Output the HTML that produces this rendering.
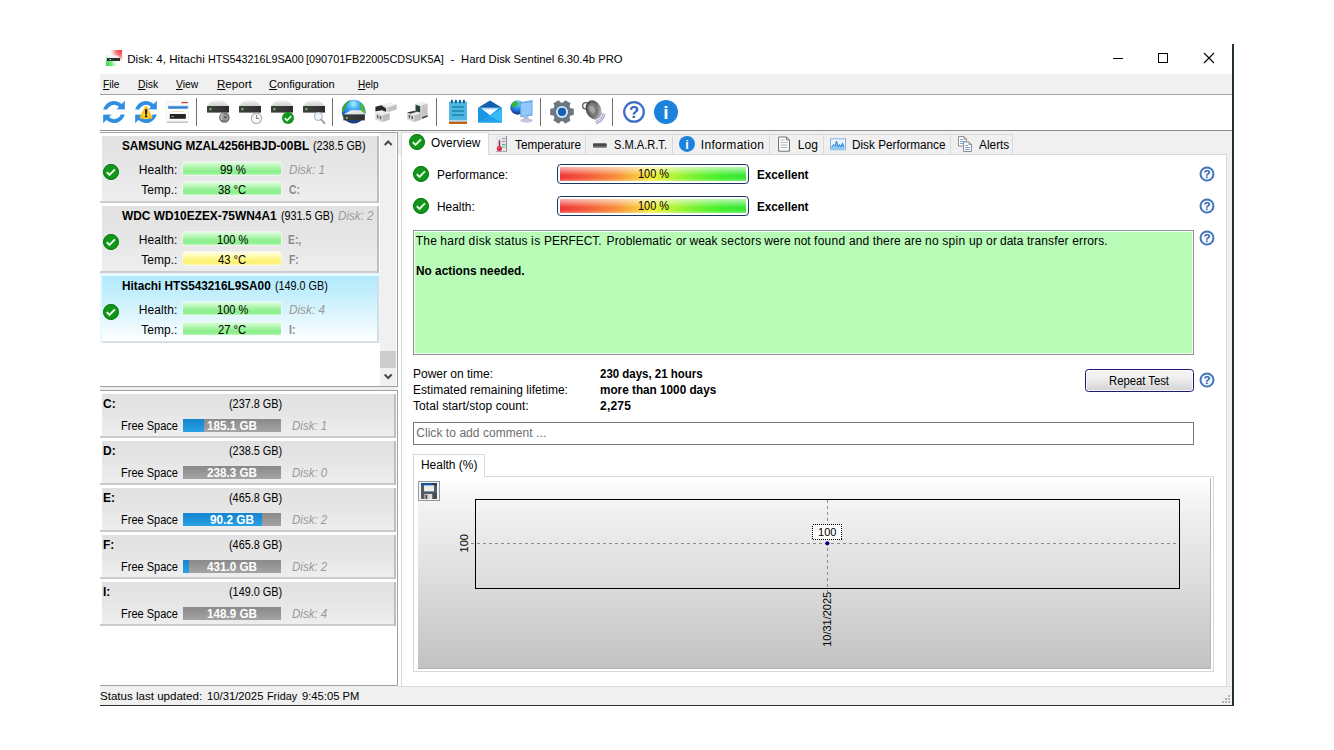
<!DOCTYPE html>
<html lang="en"><head><meta charset="utf-8"><title>Hard Disk Sentinel</title>
<style>
html,body{margin:0;padding:0;background:#fff;}
body{width:1334px;height:750px;position:relative;overflow:hidden;font-family:"Liberation Sans", sans-serif;font-size:12px;color:#000;}
#app div,#app svg{position:absolute;box-sizing:border-box;}
#app span.t{position:absolute;white-space:pre;line-height:14px;height:14px;transform-origin:0 0;}
#app u{text-decoration:underline;text-underline-offset:1px;text-decoration-thickness:1px;}

</style></head><body><div id="app">
<div style="left:1232px;top:44px;width:1.5px;height:662.4px;background:#243232;"></div>
<div style="left:100px;top:705px;width:1133.5px;height:1.3px;background:#243232;"></div>
<svg style="left:106px;top:50px" width="16" height="16" viewBox="0 0 16 16">
<defs><radialGradient id="tr" cx="1" cy="0" r="1"><stop offset="0" stop-color="#ee2c34"/><stop offset=".45" stop-color="#fb8a90"/><stop offset=".85" stop-color="#fff" stop-opacity="0"/></radialGradient>
<radialGradient id="tgn" cx="0" cy="1" r=".9"><stop offset="0" stop-color="#2fd43c"/><stop offset=".4" stop-color="#6fe878"/><stop offset=".9" stop-color="#fff" stop-opacity="0"/></radialGradient></defs>
<rect width="16" height="16" fill="#fff"/><rect width="16" height="16" fill="url(#tr)"/><rect width="16" height="16" fill="url(#tgn)"/>
<path d="M2.500 5.500h9.500l1.500 2.500h-12.500z" fill="#eef2f2" opacity=".8"/><rect x="1" y="8" width="13" height="3" fill="#26332f"/><rect x="3.600" y="9" width="1.400" height="1" fill="#e8e8e8"/></svg>
<svg style="left:1100px;top:45px" width="130" height="28" viewBox="0 0 130 28">
<path d="M13 13.5h10" stroke="#000" stroke-width="1"/>
<rect x="58.5" y="8.5" width="9" height="9" fill="none" stroke="#000" stroke-width="1"/>
<path d="M104 8l10 10M114 8l-10 10" stroke="#000" stroke-width="1.1"/></svg>
<div style="left:100px;top:74px;width:1132px;height:20px;background:#f0f0f0;"></div>
<div style="left:100px;top:94px;width:1132px;height:1px;background:#a2a2a2;"></div>
<div style="left:100px;top:130px;width:1132px;height:1px;background:#8c8c8c;"></div>
<div style="left:196px;top:98px;width:1px;height:28px;background:#6e6e6e;"></div>
<div style="left:332px;top:98px;width:1px;height:28px;background:#6e6e6e;"></div>
<div style="left:436px;top:98px;width:1px;height:28px;background:#6e6e6e;"></div>
<div style="left:540px;top:98px;width:1px;height:28px;background:#6e6e6e;"></div>
<div style="left:612px;top:98px;width:1px;height:28px;background:#6e6e6e;"></div>
<svg style="left:100px;top:96px" width="600" height="32" viewBox="100 96 600 32">
<defs>
<linearGradient id="hb" x1="0" y1="0" x2="1" y2="0"><stop offset="0" stop-color="#36482f"/><stop offset=".35" stop-color="#3a3a3a"/><stop offset="1" stop-color="#2e2e2e"/></linearGradient>
<linearGradient id="ht" x1="0" y1="0" x2="0" y2="1"><stop offset="0" stop-color="#f1f1f1"/><stop offset="1" stop-color="#cfcfcf"/></linearGradient>
<radialGradient id="gl" cx=".5" cy=".18" r=".85"><stop offset="0" stop-color="#b4f0ff"/><stop offset=".25" stop-color="#4cb4f4"/><stop offset=".6" stop-color="#1f74dc"/><stop offset="1" stop-color="#122c74"/></radialGradient>
<linearGradient id="gy" x1="0" y1="0" x2="1" y2="1"><stop offset="0" stop-color="#f4f4f4"/><stop offset="1" stop-color="#b4b4b4"/></linearGradient>
<linearGradient id="sp" x1="0" y1="0" x2="1" y2="1"><stop offset="0" stop-color="#3c3c3c"/><stop offset=".55" stop-color="#6a6a6a"/><stop offset="1" stop-color="#e0e0e0"/></linearGradient>
<clipPath id="ct"><rect x="100" y="99" width="27" height="10.600"/></clipPath><clipPath id="cb"><rect x="100" y="114.400" width="27" height="10.600"/></clipPath>
<g id="sync" fill="#2e8ee2"><g clip-path="url(#ct)"><path d="M105.090 113.570A9.050 9.050 0 0 1 121.400 106.800" fill="none" stroke="#2e8ee2" stroke-width="3.900"/><path d="M124.800 100.800v9h-8.600z"/></g>
<g clip-path="url(#cb)"><path d="M122.910 110.430A9.050 9.050 0 0 1 106.600 117.200" fill="none" stroke="#2e8ee2" stroke-width="3.900"/><path d="M103.200 123.200v-9h8.600z"/></g></g>
<g id="hdd"><path d="M211.300 101.200q.500-.600 1.500-.600h10.400q1 0 1.500.600l4.300 5h-22z" fill="url(#ht)"/><rect x="207" y="106" width="22" height="6.6" fill="url(#hb)"/><rect x="209.6" y="108.3" width="1.8" height="1.8" fill="#8fd48f"/></g>
</defs>
<use href="#sync"/>
<use href="#sync" x="32"/>
<path d="M146 107l5.200 10.600h-10.400z" fill="#fbc018" stroke="#fbc018" stroke-width="2.200" stroke-linejoin="round"/><path d="M146 108.500l3.800 8h-7.600z" fill="#fdd535"/><rect x="145" y="109.200" width="2.100" height="5.300" fill="#2a1a08"/><rect x="145" y="115.300" width="2.100" height="1.900" fill="#2a1a08"/>
<!-- view icon -->
<rect x="166.500" y="101.300" width="22" height="20.500" rx="1" fill="#fcfcfc" stroke="#f0f0f0"/><rect x="167" y="121.600" width="21" height="1.100" fill="#b4b4b4"/>
<rect x="181.500" y="102" width="6.200" height="1.200" fill="#d83030"/><rect x="168.200" y="105.900" width="19.500" height="2.800" fill="#2a7ccc"/><rect x="168.200" y="105.900" width="19.500" height="1" fill="#6aaae6"/><rect x="172" y="111" width="11" height="0.800" fill="#ecd8c0"/>
<rect x="169.800" y="114" width="16" height="4.800" fill="#242424"/><rect x="171.500" y="116" width="2" height="1" fill="#bbb"/>
<!-- hdd icons -->
<use href="#hdd"/><use href="#hdd" x="32"/><use href="#hdd" x="64"/><use href="#hdd" x="96"/>
<circle cx="224.400" cy="117.400" r="5.300" fill="#747474"/><circle cx="225" cy="117.400" r="3.200" fill="#9a9a9a"/><circle cx="225.400" cy="117.200" r="1.300" fill="#5a5a5a"/><path d="M221.800 119.800a3.800 3.800 0 0 1 1.800-6" fill="none" stroke="#d4d4d4" stroke-width="1.200"/>
<circle cx="256.5" cy="118.3" r="5.2" fill="#f6f6f6" stroke="#b4b4b4" stroke-width="1.2"/><path d="M256.5 114.8v3.7h2.8" fill="none" stroke="#8a8a8a" stroke-width="1.1"/>
<circle cx="288" cy="118" r="6" fill="#13961b"/><path d="M284.8 118.2l2.2 2.3l4.3-4.5" fill="none" stroke="#e8ffe8" stroke-width="1.7"/>
<circle cx="318.3" cy="116.5" r="3.9" fill="#f0f5fa" stroke="#b4c0cc" stroke-width="1.3"/><path d="M321.2 119.6l3.4 3.6" stroke="#9aa6b4" stroke-width="2" stroke-linecap="round"/>
<!-- globe + hdd -->
<circle cx="353.600" cy="111.600" r="11.800" fill="url(#gl)"/>
<path d="M343.500 106c1.500-3 4-5 7-5.800c-1 2-3 3-4 5s-1.500 4-2.500 6s-2 1-2-1s.500-3 1.500-4.200z" fill="#3aa83a"/><path d="M360.500 102.500c2.500 1.500 4.200 4.500 4.700 8s-.200 4.500-1.500 3.500s-2.500-3-3-5.500s-1.200-4.500-.200-6z" fill="#4cb840"/>
<path d="M351.200 110.200h9.400l4.600 4.400h-21.800z" fill="#f0f0f0"/><path d="M343.400 114.600h21.800v-.800l-4.600-3.600z" fill="#d8d8d8" opacity=".6"/><rect x="343.400" y="114.500" width="21.400" height="5.900" fill="url(#hb)"/><rect x="346" y="117" width="1.600" height="1.800" fill="#8fd48f"/>
<!-- device icons -->
<path d="M381.300 104.600l9.200-2.200l6.300 2.200l-8.800 2.600z" fill="#efefef"/><path d="M388 107.200l8.800-2.600v5l-8.800 2.600z" fill="#c2c2c2"/><path d="M381.300 104.600l6.700 2.600v5l-6.700-2.600z" fill="#d8d8d8"/>
<path d="M375.400 106.800l5.900-1.600l4.700 3.200v3.800l-4-2l-6.600 1.400z" fill="#2a2a2a"/>
<path d="M375.300 112.600l7.200-1.800l7.300 2.400l-7.300 2z" fill="#ebebeb"/><path d="M375.300 112.600l7.200 2.600v7l-7.200-2.800z" fill="#d9d9d9"/><path d="M382.500 115.200l7.300-2v6.400l-7.300 2.600z" fill="#bdbdbd"/>
<rect x="377" y="115" width="1.400" height="3.200" fill="#5a5a5a"/><rect x="379.800" y="116" width="1.400" height="3.200" fill="#5a5a5a"/>
<path d="M415 103.400l6.500-1.800l6.200 2l-6.400 1.800z" fill="#efefef"/><path d="M421.300 105.400l6.400-1.800v11.600l-6.400 2.200z" fill="#c4c4c4"/><path d="M415 103.400l6.300 2v12l-6.300-2.400z" fill="#dadada"/>
<path d="M415.600 104.800l4.600 1.500v6.700l-4.600-1.600z" fill="#27453a"/><path d="M422 117.200l5.700-2v1.600l-5.700 2z" fill="#2e2e2e"/>
<path d="M407 112.600l7.200-1.800l7.300 2.400l-7.300 2z" fill="#ebebeb"/><path d="M407 112.600l7.200 2.600v7l-7.200-2.800z" fill="#d9d9d9"/><path d="M414.200 115.200l7.300-2v6.400l-7.300 2.600z" fill="#bdbdbd"/><path d="M407 112.600l7.200-1.800l3 1l-7 1.900z" fill="#3c3c3c"/>
<rect x="408.700" y="115" width="1.400" height="3.200" fill="#5a5a5a"/><rect x="411.500" y="116" width="1.400" height="3.200" fill="#5a5a5a"/>
<!-- notepad -->
<rect x="449" y="101.500" width="18" height="22.500" rx="1" fill="#52b6e4"/><rect x="449" y="121.400" width="18" height="2.600" fill="#c4621a"/><rect x="449" y="120.400" width="18" height="1" fill="#e8f4fa"/>
<g fill="#1a5a8c"><rect x="451" y="99.800" width="1.800" height="3.400"/><rect x="455" y="99.800" width="1.800" height="3.400"/><rect x="459" y="99.800" width="1.800" height="3.400"/><rect x="463" y="99.800" width="1.800" height="3.400"/></g>
<g fill="#1688a8"><rect x="452" y="106.300" width="12" height="1.500"/><rect x="452" y="110.300" width="12" height="1.500"/><rect x="452" y="114.300" width="12" height="1.500"/></g>
<!-- mail -->
<path d="M478 107.800l12-7.300l12 7.300z" fill="#125cb0"/><rect x="478" y="107.800" width="24" height="14.700" fill="#1b96e4"/><path d="M502 108.500l-12.500 7.300l12.500 6.700z" fill="#38bcf8"/><path d="M478 122.500l11.500-6.700l12.500 6.700z" fill="#22a2ec"/><path d="M481.500 108.500h17l-8.500 6.800z" fill="#f6fcff"/><path d="M481.500 108.500h17l-1.500 1.200h-14z" fill="#cfe6f6"/>
<!-- globe + monitor -->
<circle cx="517.500" cy="107.500" r="7.200" fill="url(#gl)"/><path d="M512.500 103c1.500-2 4-2.500 5.500-1s0 3.500-2 4.500s-3.500 1-4-.500s-.300-2 .500-3z" fill="#3cb43c"/>
<path d="M519.500 102.500l13-2.500v15.500l-12 1.800z" fill="#5ea6ea"/><path d="M520.800 103.700l10.700-2v12.700l-9.900 1.500z" fill="#92c8fa"/>
<path d="M524 116.800l4-.600l1 3h-5.500z" fill="#a8b4d4"/><ellipse cx="526.500" cy="120.600" rx="6.300" ry="2.100" fill="#c4c6e0"/>
<!-- gear -->
<g transform="translate(562 111.900)"><g fill="#6d7781" transform="rotate(30)"><circle r="9.300"/><g id="tooth"><path d="M-3.900 -7l.8-4.800h6.200l.8 4.800zM-3.900 7l.8 4.800h6.200l.8-4.800z"/></g><use href="#tooth" transform="rotate(60)"/><use href="#tooth" transform="rotate(120)"/></g><circle r="6" fill="#d4e9fa"/><circle r="4.100" fill="#1560b2"/></g>
<!-- speaker -->
<circle cx="585.800" cy="105.800" r="3.200" fill="#f4f4f4" stroke="#5a5a62" stroke-width="1.300"/>
<g transform="translate(593.600 109.800) rotate(-24)"><ellipse rx="7.600" ry="9.800" fill="url(#sp)"/><ellipse cx="-0.500" cy="-0.500" rx="5" ry="7" fill="#7a7a7a"/><ellipse cx="-1" cy="-1" rx="2.600" ry="4" fill="#a4a4a4"/></g>
<g fill="none" stroke="#aaa4c6" stroke-width="1.200"><path d="M601.500 112.500a9 9 0 0 1-7 7"/><path d="M603.300 113.200a11 11 0 0 1-8 8.600"/><path d="M605 114a13 13 0 0 1-9 9.600"/></g>
<!-- help -->
<circle cx="634" cy="111.900" r="9.800" fill="#fff" stroke="#3f70c8" stroke-width="2.300"/>
<text x="634" y="118" text-anchor="middle" font-family="Liberation Sans,sans-serif" font-size="16.500" font-weight="700" fill="#2f62bc">?</text>
<!-- info -->
<circle cx="666" cy="111.900" r="12" fill="#1b83dc"/>
<text x="666" y="119" text-anchor="middle" font-family="Liberation Sans,sans-serif" font-size="19" font-weight="700" fill="#fff">i</text>
</svg>

<div style="left:100px;top:132px;width:298px;height:1px;background:#a0a0a0;"></div>
<div style="left:397px;top:132px;width:1px;height:255px;background:#a0a0a0;"></div>
<div style="left:100px;top:386px;width:298px;height:1px;background:#a0a0a0;"></div>
<div style="left:380px;top:133px;width:16px;height:253px;background:#f0f0f0;"></div>
<div style="left:380px;top:351px;width:16px;height:17px;background:#cdcdcd;"></div>
<svg style="left:379.5px;top:133px" width="17" height="253" viewBox="0 0 17 253"><path d="M4.700 12l3.500-3.500 3.500 3.500" fill="none" stroke="#484848" stroke-width="2"/><path d="M4.700 241.500l3.500 3.500 3.500-3.500" fill="none" stroke="#484848" stroke-width="2"/></svg>
<div style="left:102px;top:136px;width:275px;height:65px;background:linear-gradient(180deg,#e2e2e2 0%,#e6e6e6 50%,#efefef 100%);"></div>
<div style="left:100px;top:201px;width:279px;height:2px;background:#cbcbcb;"></div>
<div style="left:377px;top:136px;width:2px;height:67px;background:#bebebe;"></div>
<svg style="left:102px;top:163px" width="18" height="18" viewBox="-9 -9 18 18"><circle r="7.9" fill="#13961b"/><circle r="7.4" fill="none" stroke="#0b7a12" stroke-width="1"/><path d="M-4.2 0.2l2.7 2.8l5.4-5.6" fill="none" stroke="#e8ffe8" stroke-width="1.9"/></svg>
<div style="left:183px;top:162px;width:98px;height:13px;background:linear-gradient(180deg,#e6ffe6 0%,#c4fac4 22%,#9af29a 55%,#8aee8a 78%,#b2f8b2 100%);border-radius:1.5px;box-shadow:0 0 0 1px rgba(255,255,255,.45);"></div>
<div style="left:183px;top:182px;width:98px;height:13px;background:linear-gradient(180deg,#e6ffe6 0%,#c4fac4 22%,#9af29a 55%,#8aee8a 78%,#b2f8b2 100%);border-radius:1.5px;box-shadow:0 0 0 1px rgba(255,255,255,.45);"></div>
<div style="left:102px;top:206px;width:275px;height:65px;background:linear-gradient(180deg,#e2e2e2 0%,#e6e6e6 50%,#efefef 100%);"></div>
<div style="left:100px;top:271px;width:279px;height:2px;background:#cbcbcb;"></div>
<div style="left:377px;top:206px;width:2px;height:67px;background:#bebebe;"></div>
<svg style="left:102px;top:233px" width="18" height="18" viewBox="-9 -9 18 18"><circle r="7.9" fill="#13961b"/><circle r="7.4" fill="none" stroke="#0b7a12" stroke-width="1"/><path d="M-4.2 0.2l2.7 2.8l5.4-5.6" fill="none" stroke="#e8ffe8" stroke-width="1.9"/></svg>
<div style="left:183px;top:232px;width:98px;height:13px;background:linear-gradient(180deg,#e6ffe6 0%,#c4fac4 22%,#9af29a 55%,#8aee8a 78%,#b2f8b2 100%);border-radius:1.5px;box-shadow:0 0 0 1px rgba(255,255,255,.45);"></div>
<div style="left:183px;top:252px;width:98px;height:13px;background:linear-gradient(180deg,#ffffe8 0%,#fffbb0 30%,#fff47c 65%,#fdf070 82%,#fff9a8 100%);border-radius:1.5px;box-shadow:0 0 0 1px rgba(255,255,255,.45);"></div>
<div style="left:100px;top:273px;width:280px;height:70px;background:#e6fbff;"></div>
<div style="left:102px;top:276px;width:275px;height:65px;background:linear-gradient(180deg,#b2eafc 0%,#c4effc 30%,#e6f8fe 70%,#fdfeff 100%);"></div>
<div style="left:102px;top:341px;width:277px;height:2px;background:#dcdfe0;"></div>
<div style="left:377px;top:276px;width:2px;height:67px;background:#d4dde2;"></div>
<svg style="left:102px;top:303px" width="18" height="18" viewBox="-9 -9 18 18"><circle r="7.9" fill="#13961b"/><circle r="7.4" fill="none" stroke="#0b7a12" stroke-width="1"/><path d="M-4.2 0.2l2.7 2.8l5.4-5.6" fill="none" stroke="#e8ffe8" stroke-width="1.9"/></svg>
<div style="left:183px;top:302px;width:98px;height:13px;background:linear-gradient(180deg,#e6ffe6 0%,#c4fac4 22%,#9af29a 55%,#8aee8a 78%,#b2f8b2 100%);border-radius:1.5px;box-shadow:0 0 0 1px rgba(255,255,255,.45);"></div>
<div style="left:183px;top:322px;width:98px;height:13px;background:linear-gradient(180deg,#e6ffe6 0%,#c4fac4 22%,#9af29a 55%,#8aee8a 78%,#b2f8b2 100%);border-radius:1.5px;box-shadow:0 0 0 1px rgba(255,255,255,.45);"></div>
<div style="left:100px;top:390px;width:298px;height:1px;background:#a0a0a0;"></div>
<div style="left:100px;top:387px;width:298px;height:3px;background:#f0f0f0;"></div>
<div style="left:397px;top:390px;width:1px;height:296px;background:#a0a0a0;"></div>
<div style="left:100px;top:685px;width:297px;height:1px;background:#a0a0a0;"></div>
<div style="left:102px;top:394px;width:292px;height:42px;background:linear-gradient(180deg,#e1e1e1 0%,#e6e6e6 50%,#eeeeee 100%);"></div>
<div style="left:100px;top:436px;width:296px;height:2px;background:#cbcbcb;"></div>
<div style="left:394px;top:394px;width:2px;height:44px;background:#bebebe;"></div>
<div style="left:183px;top:419px;width:98px;height:13px;background:linear-gradient(180deg,#8a8a8a 0%,#969696 50%,#a4a4a4 100%);"></div>
<div style="left:183px;top:419px;width:21px;height:13px;background:linear-gradient(180deg,#1584d0 0%,#1f95dc 60%,#2aa2e4 100%);"></div>
<div style="left:102px;top:441px;width:292px;height:42px;background:linear-gradient(180deg,#e1e1e1 0%,#e6e6e6 50%,#eeeeee 100%);"></div>
<div style="left:100px;top:483px;width:296px;height:2px;background:#cbcbcb;"></div>
<div style="left:394px;top:441px;width:2px;height:44px;background:#bebebe;"></div>
<div style="left:183px;top:466px;width:98px;height:13px;background:linear-gradient(180deg,#8a8a8a 0%,#969696 50%,#a4a4a4 100%);"></div>
<div style="left:102px;top:488px;width:292px;height:42px;background:linear-gradient(180deg,#e1e1e1 0%,#e6e6e6 50%,#eeeeee 100%);"></div>
<div style="left:100px;top:530px;width:296px;height:2px;background:#cbcbcb;"></div>
<div style="left:394px;top:488px;width:2px;height:44px;background:#bebebe;"></div>
<div style="left:183px;top:513px;width:98px;height:13px;background:linear-gradient(180deg,#8a8a8a 0%,#969696 50%,#a4a4a4 100%);"></div>
<div style="left:183px;top:513px;width:79px;height:13px;background:linear-gradient(180deg,#1584d0 0%,#1f95dc 60%,#2aa2e4 100%);"></div>
<div style="left:102px;top:535px;width:292px;height:42px;background:linear-gradient(180deg,#e1e1e1 0%,#e6e6e6 50%,#eeeeee 100%);"></div>
<div style="left:100px;top:577px;width:296px;height:2px;background:#cbcbcb;"></div>
<div style="left:394px;top:535px;width:2px;height:44px;background:#bebebe;"></div>
<div style="left:183px;top:560px;width:98px;height:13px;background:linear-gradient(180deg,#8a8a8a 0%,#969696 50%,#a4a4a4 100%);"></div>
<div style="left:183px;top:560px;width:6px;height:13px;background:linear-gradient(180deg,#1584d0 0%,#1f95dc 60%,#2aa2e4 100%);"></div>
<div style="left:102px;top:582px;width:292px;height:42px;background:linear-gradient(180deg,#e1e1e1 0%,#e6e6e6 50%,#eeeeee 100%);"></div>
<div style="left:100px;top:624px;width:296px;height:2px;background:#cbcbcb;"></div>
<div style="left:394px;top:582px;width:2px;height:44px;background:#bebebe;"></div>
<div style="left:183px;top:607px;width:98px;height:13px;background:linear-gradient(180deg,#8a8a8a 0%,#969696 50%,#a4a4a4 100%);"></div>
<div style="left:398px;top:131px;width:834px;height:24px;background:#f0f0f0;"></div>
<div style="left:1227px;top:131px;width:5px;height:555px;background:#f0f0f0;"></div>
<div style="left:100px;top:686px;width:1132px;height:19px;background:#f0f0f0;"></div>
<div style="left:398px;top:686px;width:834px;height:1px;background:#dadada;"></div>
<div style="left:401px;top:133px;width:1px;height:553px;background:#d9d9d9;"></div>
<div style="left:1226px;top:154px;width:1px;height:532px;background:#d9d9d9;"></div>
<div style="left:402px;top:154px;width:825px;height:1px;background:#d9d9d9;"></div>
<div style="left:488px;top:134px;width:98px;height:21px;background:#f0f0f0;border:1px solid #d9d9d9;"></div>
<div style="left:585px;top:134px;width:88px;height:21px;background:#f0f0f0;border:1px solid #d9d9d9;"></div>
<div style="left:672px;top:134px;width:98px;height:21px;background:#f0f0f0;border:1px solid #d9d9d9;"></div>
<div style="left:769px;top:134px;width:55px;height:21px;background:#f0f0f0;border:1px solid #d9d9d9;"></div>
<div style="left:823px;top:134px;width:128px;height:21px;background:#f0f0f0;border:1px solid #d9d9d9;"></div>
<div style="left:950px;top:134px;width:63px;height:21px;background:#f0f0f0;border:1px solid #d9d9d9;"></div>
<div style="left:401px;top:132px;width:87.5px;height:23px;background:#fff;border:1px solid #d9d9d9;border-bottom:none;"></div>
<svg style="left:408px;top:133px" width="18" height="18" viewBox="-9 -9 18 18"><circle r="7.9" fill="#13961b"/><circle r="7.4" fill="none" stroke="#0b7a12" stroke-width="1"/><path d="M-4.2 0.2l2.7 2.8l5.4-5.6" fill="none" stroke="#e8ffe8" stroke-width="1.9"/></svg>
<svg style="left:490px;top:133px" width="500" height="22" viewBox="490 133 500 22">
<defs><linearGradient id="tg" x1="0" y1="0" x2="1" y2="0"><stop offset="0" stop-color="#f2f2f2"/><stop offset="1" stop-color="#c4c4c4"/></linearGradient></defs>
<rect x="496" y="136" width="11" height="15.500" fill="#e7e7eb"/><rect x="506" y="136" width="1" height="15.500" fill="#8c8c94"/><rect x="496" y="151" width="11" height="0.800" fill="#a0a0a8"/>
<rect x="502" y="138.200" width="3.500" height="1" fill="#9a9a9a"/><rect x="502" y="141" width="3.500" height="1" fill="#9a9a9a"/><rect x="502" y="144" width="3.500" height="1.200" fill="#4cba8c"/><rect x="502" y="146.500" width="3.500" height="1.200" fill="#6cc8a4"/>
<rect x="498.700" y="140.300" width="1.500" height="6.500" fill="#8c3044"/><circle cx="499.400" cy="148.600" r="2.600" fill="#d82848"/><circle cx="498.700" cy="147.900" r="1" fill="#f0607a"/>
<rect x="593" y="143.300" width="13.700" height="4.200" rx="1" fill="#4a4a4a"/><rect x="593" y="146.500" width="13.700" height="1" fill="#8a8a8a"/>
<circle cx="687" cy="143.900" r="8" fill="#1b83dc"/>
<text x="687" y="148.600" text-anchor="middle" font-family="Liberation Sans,sans-serif" font-size="12.500" font-weight="700" fill="#fff">i</text>
<path d="M778.500 137h8l3 3v11.200h-11z" fill="#fdfdfd" stroke="#747474" stroke-width="1"/><path d="M786.500 137v3h3" fill="none" stroke="#747474" stroke-width="1"/>
<g fill="#b8b8b8"><rect x="780.500" y="139.500" width="4" height="1"/><rect x="780.500" y="142" width="7" height="1"/><rect x="780.500" y="144.500" width="7" height="1"/><rect x="780.500" y="147" width="7" height="1"/></g>
<rect x="830.500" y="138.800" width="15" height="11" fill="#eaf4fd" stroke="#86b2dc" stroke-width="1"/><path d="M831.500 147.500l2-3l1.500 1.500l1.500-5l1.500 6l1.500-2.500l1.500 2.500l1.500-4l1.500 4.500v1.800h-12.500z" fill="#86c8f6"/><path d="M831.500 147.500l2-3l1.500 1.500l1.500-5l1.500 6l1.500-2.500l1.500 2.500l1.500-4l1.500 4.500" fill="none" stroke="#2c82d4" stroke-width="1"/>
<path d="M958.500 136.500h5.500l2.500 2.500v7h-8z" fill="#fdfdfd" stroke="#8e8e8e" stroke-width="1"/><path d="M964 136.500v2.500h2.500" fill="none" stroke="#8e8e8e" stroke-width="1"/><g fill="#7ea6d6"><rect x="960" y="139" width="3" height="1"/><rect x="960" y="141" width="5" height="1"/><rect x="960" y="143" width="3" height="1"/></g>
<path d="M963.500 142h5.500l2.500 2.500v7h-8z" fill="#fdfdfd" stroke="#8e8e8e" stroke-width="1"/><path d="M969 142v2.500h2.500" fill="none" stroke="#8e8e8e" stroke-width="1"/><g fill="#7ea6d6"><rect x="965" y="145" width="3" height="1"/><rect x="965" y="147" width="5" height="1"/><rect x="965" y="149" width="5" height="1"/></g>
</svg>

<svg style="left:412px;top:165px" width="18" height="18" viewBox="-9 -9 18 18"><circle r="7.9" fill="#13961b"/><circle r="7.4" fill="none" stroke="#0b7a12" stroke-width="1"/><path d="M-4.2 0.2l2.7 2.8l5.4-5.6" fill="none" stroke="#e8ffe8" stroke-width="1.9"/></svg>
<div style="left:557px;top:164px;width:192px;height:20px;background:#fff;border:1px solid #1c3460;border-radius:4px;"></div>
<div style="left:560px;top:167px;width:186px;height:14px;background:linear-gradient(90deg,#f03636 0%,#f35a38 14%,#f88e3a 30%,#f9c63c 42%,#f0f03a 50%,#b6f438 60%,#70f230 74%,#40ee2c 88%,#3ae63a 100%);"></div>
<div style="left:560px;top:167px;width:186px;height:14px;background:linear-gradient(180deg,rgba(255,255,255,.62) 0%,rgba(255,255,255,.28) 35%,rgba(255,255,255,0) 58%,rgba(255,255,255,.0) 80%,rgba(255,255,255,.3) 100%);"></div>
<svg style="left:1198px;top:165px" width="18" height="18" viewBox="-9 -9 18 18"><circle r="6.5" fill="#f2f8fe" stroke="#4474ba" stroke-width="2"/><text x="0" y="3.9" text-anchor="middle" font-family="Liberation Sans,sans-serif" font-size="11.5" font-weight="700" fill="#2d5eae">?</text></svg>
<svg style="left:412px;top:197px" width="18" height="18" viewBox="-9 -9 18 18"><circle r="7.9" fill="#13961b"/><circle r="7.4" fill="none" stroke="#0b7a12" stroke-width="1"/><path d="M-4.2 0.2l2.7 2.8l5.4-5.6" fill="none" stroke="#e8ffe8" stroke-width="1.9"/></svg>
<div style="left:557px;top:196px;width:192px;height:20px;background:#fff;border:1px solid #1c3460;border-radius:4px;"></div>
<div style="left:560px;top:199px;width:186px;height:14px;background:linear-gradient(90deg,#f03636 0%,#f35a38 14%,#f88e3a 30%,#f9c63c 42%,#f0f03a 50%,#b6f438 60%,#70f230 74%,#40ee2c 88%,#3ae63a 100%);"></div>
<div style="left:560px;top:199px;width:186px;height:14px;background:linear-gradient(180deg,rgba(255,255,255,.62) 0%,rgba(255,255,255,.28) 35%,rgba(255,255,255,0) 58%,rgba(255,255,255,.0) 80%,rgba(255,255,255,.3) 100%);"></div>
<svg style="left:1198px;top:197px" width="18" height="18" viewBox="-9 -9 18 18"><circle r="6.5" fill="#f2f8fe" stroke="#4474ba" stroke-width="2"/><text x="0" y="3.9" text-anchor="middle" font-family="Liberation Sans,sans-serif" font-size="11.5" font-weight="700" fill="#2d5eae">?</text></svg>
<svg style="left:1198px;top:229px" width="18" height="18" viewBox="-9 -9 18 18"><circle r="6.5" fill="#f2f8fe" stroke="#4474ba" stroke-width="2"/><text x="0" y="3.9" text-anchor="middle" font-family="Liberation Sans,sans-serif" font-size="11.5" font-weight="700" fill="#2d5eae">?</text></svg>
<div style="left:413px;top:230px;width:781px;height:125px;background:#b8fcb8;border:1px solid #8f968f;box-shadow:inset 0 0 0 1px #f4fff4;"></div>
<div style="left:1085px;top:369px;width:109px;height:23px;background:linear-gradient(180deg,#f5f5f5 0%,#eeeeee 40%,#e0e0e2 70%,#d2d2d6 100%);border:1.3px solid #1a1a74;border-radius:3.5px;box-shadow:inset 0 0 0 1px rgba(255,255,255,.8);"></div>
<svg style="left:1198px;top:371px" width="18" height="18" viewBox="-9 -9 18 18"><circle r="6.5" fill="#f2f8fe" stroke="#4474ba" stroke-width="2"/><text x="0" y="3.9" text-anchor="middle" font-family="Liberation Sans,sans-serif" font-size="11.5" font-weight="700" fill="#2d5eae">?</text></svg>
<div style="left:413px;top:422px;width:781px;height:23px;background:#fff;border:1px solid #7a7a7a;"></div>
<div style="left:413px;top:476px;width:801px;height:196px;background:#fff;border:1px solid #d9d9d9;"></div>
<div style="left:413px;top:454px;width:72px;height:23px;background:#fff;border:1px solid #d9d9d9;border-bottom:none;"></div>
<div style="left:418px;top:478px;width:793px;height:191px;background:linear-gradient(180deg,#ffffff 0%,#f2f2f2 15%,#dcdcdc 55%,#c2c2c2 100%);"></div>
<div style="left:418px;top:668px;width:793px;height:1px;background:#b0b0b0;"></div>
<div style="left:1210px;top:478px;width:1px;height:191px;background:#b8b8b8;"></div>
<div style="left:418px;top:481px;width:22px;height:20px;background:#f3f3f3;border:1px solid #989898;"></div>
<svg style="left:421px;top:483px" width="16" height="16" viewBox="0 0 16 16"><rect x="0" y="0" width="16" height="16" rx=".8" fill="#545c66"/>
<rect x="0" y="0" width="16" height="2.200" fill="#1d4f92"/><rect x="11" y="0" width="5" height="2.200" fill="#2c3a4c"/><rect x="3" y="2" width="10" height="6.600" fill="#f0ece8"/><rect x="3" y="2" width="10" height="1.200" fill="#9cc4ea"/><rect x="3" y="8.600" width="10" height="1" fill="#3a5a82"/>
<rect x="3.500" y="11" width="8" height="5" fill="#dcdcdc"/><rect x="4.500" y="11.800" width="1.800" height="4.200" fill="#3e444c"/><rect x="11.500" y="10" width="4.500" height="6" fill="#474d55"/></svg>
<svg style="left:460px;top:495px" width="730" height="160" viewBox="460 495 730 160">
<rect x="475.5" y="499.5" width="704" height="89" fill="none" stroke="#000" stroke-width="1"/>
<path d="M471 543.5H1179" stroke="#8c8c8c" stroke-width="1" stroke-dasharray="3 3"/>
<path d="M827.5 500V592" stroke="#8c8c8c" stroke-width="1" stroke-dasharray="3 3"/>
<rect x="812.5" y="524.5" width="29" height="15" fill="#fff" stroke="#000" stroke-width="1" stroke-dasharray="1 1" shape-rendering="crispEdges"/>
<circle cx="827.3" cy="543.3" r="2.1" fill="#000078"/>
<text x="827.3" y="536" text-anchor="middle" font-family="Liberation Sans,sans-serif" font-size="11" fill="#000">100</text>
<text transform="translate(467.6 543.3) rotate(-90)" text-anchor="middle" font-family="Liberation Sans,sans-serif" font-size="11" fill="#000">100</text>
<text transform="translate(831.3 619.3) rotate(-90)" text-anchor="middle" font-family="Liberation Sans,sans-serif" font-size="11" fill="#000">10/31/2025</text>
</svg>
<div style="left:100px;top:685px;width:298px;height:1px;background:#a0a0a0;"></div>
<svg style="left:1219px;top:693px" width="13" height="13" viewBox="0 0 13 13"><g fill="#b4b4b4"><rect x="9" y="2" width="2" height="2"/><rect x="6" y="5" width="2" height="2"/><rect x="9" y="5" width="2" height="2"/><rect x="3" y="8" width="2" height="2"/><rect x="6" y="8" width="2" height="2"/><rect x="9" y="8" width="2" height="2"/></g></svg>
<span class="t" id="t0" style="left:127.20px;top:52.17px;font-size:11.6px;letter-spacing:0.018px;">Disk: 4, Hitachi</span>
<span class="t" id="t1" style="left:207.50px;top:52.17px;font-size:11.6px;transform:scaleX(0.9279);">HTS543216L9SA00</span>
<span class="t" id="t2" style="left:305.90px;top:52.17px;font-size:11.6px;transform:scaleX(0.9377);">[090701FB22005CDSUK5A]</span>
<span class="t" id="t3" style="left:450.40px;top:52.17px;font-size:11.6px;letter-spacing:0.625px;">-</span>
<span class="t" id="t4" style="left:461.30px;top:52.17px;font-size:11.6px;transform:scaleX(0.9719);">Hard Disk Sentinel 6.30.4b PRO</span>
<span class="t" id="t5" style="left:103.00px;top:77.17px;font-size:11.6px;transform:scaleX(0.8822);"><u>F</u>ile</span>
<span class="t" id="t6" style="left:138.00px;top:77.17px;font-size:11.6px;transform:scaleX(0.8959);"><u>D</u>isk</span>
<span class="t" id="t7" style="left:176.30px;top:77.17px;font-size:11.6px;transform:scaleX(0.8982);"><u>V</u>iew</span>
<span class="t" id="t8" style="left:216.80px;top:77.17px;font-size:11.6px;transform:scaleX(0.9968);"><u>R</u>eport</span>
<span class="t" id="t9" style="left:268.80px;top:77.17px;font-size:11.6px;transform:scaleX(0.9512);"><u>C</u>onfiguration</span>
<span class="t" id="t10" style="left:357.60px;top:77.17px;font-size:11.6px;transform:scaleX(0.8634);"><u>H</u>elp</span>
<span class="t" id="t11" style="left:121.90px;top:138.73px;font-size:12px;font-weight:700;transform:scaleX(0.9811);">SAMSUNG MZAL4256HBJD-00BL</span>
<span class="t" id="t12" style="left:313.30px;top:138.73px;font-size:12px;transform:scaleX(0.8943);">(238.5 GB)</span>
<span class="t" id="t13" style="left:138.80px;top:162.73px;font-size:12px;letter-spacing:0.067px;">Health:</span>
<span class="t" id="t14" style="left:141.30px;top:182.73px;font-size:12px;">Temp.:</span>
<span class="t" id="t15" style="left:219.50px;top:162.73px;font-size:12px;transform:scaleX(0.9503);">99 %</span>
<span class="t" id="t16" style="left:218.10px;top:182.73px;font-size:12px;transform:scaleX(0.9351);">38 °C</span>
<span class="t" id="t17" style="left:288.80px;top:162.73px;font-size:12px;font-style:italic;color:#9a9a9a;transform:scaleX(0.9813);">Disk: 1</span>
<span class="t" id="t18" style="left:288.70px;top:182.73px;font-size:12px;font-weight:700;color:#8a8a8a;transform:scaleX(0.8600);">C:</span>
<span class="t" id="t19" style="left:121.90px;top:208.73px;font-size:12px;font-weight:700;transform:scaleX(0.9908);">WDC WD10EZEX-75WN4A1</span>
<span class="t" id="t20" style="left:281.30px;top:208.73px;font-size:12px;transform:scaleX(0.8943);">(931.5 GB)</span>
<span class="t" id="t21" style="left:338.20px;top:208.73px;font-size:12px;font-style:italic;color:#9a9a9a;transform:scaleX(0.9704);">Disk: 2</span>
<span class="t" id="t22" style="left:138.80px;top:232.73px;font-size:12px;letter-spacing:0.067px;">Health:</span>
<span class="t" id="t23" style="left:141.30px;top:252.73px;font-size:12px;">Temp.:</span>
<span class="t" id="t24" style="left:216.85px;top:232.73px;font-size:12px;transform:scaleX(0.9197);">100 %</span>
<span class="t" id="t25" style="left:218.10px;top:252.73px;font-size:12px;transform:scaleX(0.9351);">43 °C</span>
<span class="t" id="t26" style="left:288.45px;top:232.73px;font-size:12px;font-weight:700;color:#8a8a8a;transform:scaleX(0.8600);">E:,</span>
<span class="t" id="t27" style="left:288.68px;top:252.73px;font-size:12px;font-weight:700;color:#8a8a8a;transform:scaleX(0.8600);">F:</span>
<span class="t" id="t28" style="left:121.90px;top:278.73px;font-size:12px;font-weight:700;transform:scaleX(0.9821);">Hitachi HTS543216L9SA00</span>
<span class="t" id="t29" style="left:274.90px;top:278.73px;font-size:12px;transform:scaleX(0.8994);">(149.0 GB)</span>
<span class="t" id="t30" style="left:138.80px;top:302.73px;font-size:12px;letter-spacing:0.067px;">Health:</span>
<span class="t" id="t31" style="left:141.30px;top:322.73px;font-size:12px;">Temp.:</span>
<span class="t" id="t32" style="left:216.85px;top:302.73px;font-size:12px;transform:scaleX(0.9197);">100 %</span>
<span class="t" id="t33" style="left:218.10px;top:322.73px;font-size:12px;transform:scaleX(0.9351);">27 °C</span>
<span class="t" id="t34" style="left:288.80px;top:302.73px;font-size:12px;font-style:italic;color:#9a9a9a;transform:scaleX(0.9813);">Disk: 4</span>
<span class="t" id="t35" style="left:288.80px;top:322.73px;font-size:12px;font-weight:700;color:#8a8a8a;transform:scaleX(0.8851);">I:</span>
<span class="t" id="t36" style="left:103.00px;top:396.53px;font-size:12px;font-weight:700;">C:</span>
<span class="t" id="t37" style="left:228.80px;top:396.53px;font-size:12px;transform:scaleX(0.9063);">(237.8 GB)</span>
<span class="t" id="t38" style="left:120.80px;top:418.73px;font-size:12px;transform:scaleX(0.9170);">Free Space</span>
<span class="t" id="t39" style="left:207.00px;top:418.73px;font-size:12px;font-weight:700;color:#fff;transform:scaleX(0.9732);">185.1 GB</span>
<span class="t" id="t40" style="left:292.20px;top:418.73px;font-size:12px;font-style:italic;color:#9a9a9a;transform:scaleX(0.9622);">Disk: 1</span>
<span class="t" id="t41" style="left:103.00px;top:443.53px;font-size:12px;font-weight:700;">D:</span>
<span class="t" id="t42" style="left:228.80px;top:443.53px;font-size:12px;transform:scaleX(0.9063);">(238.5 GB)</span>
<span class="t" id="t43" style="left:120.80px;top:465.73px;font-size:12px;transform:scaleX(0.9170);">Free Space</span>
<span class="t" id="t44" style="left:207.00px;top:465.73px;font-size:12px;font-weight:700;color:#fff;transform:scaleX(0.9732);">238.3 GB</span>
<span class="t" id="t45" style="left:292.20px;top:465.73px;font-size:12px;font-style:italic;color:#9a9a9a;transform:scaleX(0.9622);">Disk: 0</span>
<span class="t" id="t46" style="left:103.00px;top:490.53px;font-size:12px;font-weight:700;">E:</span>
<span class="t" id="t47" style="left:228.80px;top:490.53px;font-size:12px;transform:scaleX(0.9063);">(465.8 GB)</span>
<span class="t" id="t48" style="left:120.80px;top:512.73px;font-size:12px;transform:scaleX(0.9170);">Free Space</span>
<span class="t" id="t49" style="left:210.00px;top:512.73px;font-size:12px;font-weight:700;color:#fff;transform:scaleX(0.9843);">90.2 GB</span>
<span class="t" id="t50" style="left:292.20px;top:512.73px;font-size:12px;font-style:italic;color:#9a9a9a;transform:scaleX(0.9622);">Disk: 2</span>
<span class="t" id="t51" style="left:103.00px;top:537.53px;font-size:12px;font-weight:700;">F:</span>
<span class="t" id="t52" style="left:228.80px;top:537.53px;font-size:12px;transform:scaleX(0.9063);">(465.8 GB)</span>
<span class="t" id="t53" style="left:120.80px;top:559.73px;font-size:12px;transform:scaleX(0.9170);">Free Space</span>
<span class="t" id="t54" style="left:207.00px;top:559.73px;font-size:12px;font-weight:700;color:#fff;transform:scaleX(0.9732);">431.0 GB</span>
<span class="t" id="t55" style="left:292.20px;top:559.73px;font-size:12px;font-style:italic;color:#9a9a9a;transform:scaleX(0.9622);">Disk: 2</span>
<span class="t" id="t56" style="left:103.00px;top:584.53px;font-size:12px;font-weight:700;">I:</span>
<span class="t" id="t57" style="left:228.80px;top:584.53px;font-size:12px;transform:scaleX(0.9063);">(149.0 GB)</span>
<span class="t" id="t58" style="left:120.80px;top:606.73px;font-size:12px;transform:scaleX(0.9170);">Free Space</span>
<span class="t" id="t59" style="left:207.00px;top:606.73px;font-size:12px;font-weight:700;color:#fff;transform:scaleX(0.9732);">148.9 GB</span>
<span class="t" id="t60" style="left:292.20px;top:606.73px;font-size:12px;font-style:italic;color:#9a9a9a;transform:scaleX(0.9622);">Disk: 4</span>
<span class="t" id="t61" style="left:514.50px;top:138.23px;font-size:12px;transform:scaleX(0.9796);">Temperature</span>
<span class="t" id="t62" style="left:613.50px;top:138.23px;font-size:12px;transform:scaleX(0.9243);">S.M.A.R.T.</span>
<span class="t" id="t63" style="left:700.80px;top:138.23px;font-size:12px;letter-spacing:0.306px;">Information</span>
<span class="t" id="t64" style="left:797.80px;top:138.23px;font-size:12px;letter-spacing:0.056px;">Log</span>
<span class="t" id="t65" style="left:852.00px;top:138.23px;font-size:12px;transform:scaleX(0.9803);">Disk Performance</span>
<span class="t" id="t66" style="left:979.20px;top:138.23px;font-size:12px;transform:scaleX(0.9874);">Alerts</span>
<span class="t" id="t67" style="left:431.20px;top:135.73px;font-size:12px;transform:scaleX(0.9857);">Overview</span>
<span class="t" id="t68" style="left:437.00px;top:167.73px;font-size:12px;transform:scaleX(0.9857);">Performance:</span>
<span class="t" id="t69" style="left:637.80px;top:166.53px;font-size:12px;transform:scaleX(0.9109);">100 %</span>
<span class="t" id="t70" style="left:757.00px;top:167.73px;font-size:12px;font-weight:700;transform:scaleX(0.9772);">Excellent</span>
<span class="t" id="t71" style="left:437.00px;top:199.73px;font-size:12px;transform:scaleX(0.9913);">Health:</span>
<span class="t" id="t72" style="left:637.80px;top:198.53px;font-size:12px;transform:scaleX(0.9109);">100 %</span>
<span class="t" id="t73" style="left:757.00px;top:199.73px;font-size:12px;font-weight:700;transform:scaleX(0.9772);">Excellent</span>
<span class="t" id="t74" style="left:415.80px;top:234.23px;font-size:12px;letter-spacing:0.171px;">The</span>
<span class="t" id="t75" style="left:440.30px;top:234.23px;font-size:12px;letter-spacing:0.242px;">hard</span>
<span class="t" id="t76" style="left:468.60px;top:234.23px;font-size:12px;letter-spacing:0.364px;">disk</span>
<span class="t" id="t77" style="left:494.70px;top:234.23px;font-size:12px;letter-spacing:0.164px;">status</span>
<span class="t" id="t78" style="left:531.00px;top:234.23px;font-size:12px;letter-spacing:0.664px;">is</span>
<span class="t" id="t79" style="left:544.30px;top:234.23px;font-size:12px;transform:scaleX(0.9928);">PERFECT.</span>
<span class="t" id="t80" style="left:606.50px;top:234.23px;font-size:12px;letter-spacing:0.167px;">Problematic</span>
<span class="t" id="t81" style="left:675.70px;top:234.23px;font-size:12px;transform:scaleX(0.9745);">or</span>
<span class="t" id="t82" style="left:689.40px;top:234.23px;font-size:12px;letter-spacing:0.071px;">weak</span>
<span class="t" id="t83" style="left:721.00px;top:234.23px;font-size:12px;letter-spacing:0.273px;">sectors</span>
<span class="t" id="t84" style="left:764.20px;top:234.23px;font-size:12px;letter-spacing:0.171px;">were</span>
<span class="t" id="t85" style="left:794.20px;top:234.23px;font-size:12px;transform:scaleX(0.9948);">not</span>
<span class="t" id="t86" style="left:814.10px;top:234.23px;font-size:12px;letter-spacing:0.254px;">found</span>
<span class="t" id="t87" style="left:849.10px;top:234.23px;font-size:12px;letter-spacing:0.090px;">and</span>
<span class="t" id="t88" style="left:872.70px;top:234.23px;font-size:12px;letter-spacing:0.188px;">there</span>
<span class="t" id="t89" style="left:904.30px;top:234.23px;font-size:12px;letter-spacing:0.052px;">are</span>
<span class="t" id="t90" style="left:925.10px;top:234.23px;font-size:12px;letter-spacing:0.270px;">no</span>
<span class="t" id="t91" style="left:942.30px;top:234.23px;font-size:12px;letter-spacing:0.321px;">spin</span>
<span class="t" id="t92" style="left:968.90px;top:234.23px;font-size:12px;letter-spacing:0.270px;">up</span>
<span class="t" id="t93" style="left:986.10px;top:234.23px;font-size:12px;letter-spacing:0.114px;">or</span>
<span class="t" id="t94" style="left:1000.30px;top:234.23px;font-size:12px;transform:scaleX(0.9975);">data</span>
<span class="t" id="t95" style="left:1026.90px;top:234.23px;font-size:12px;letter-spacing:0.139px;">transfer</span>
<span class="t" id="t96" style="left:1072.30px;top:234.23px;font-size:12px;letter-spacing:0.118px;">errors.</span>
<span class="t" id="t97" style="left:415.90px;top:264.23px;font-size:12px;font-weight:700;transform:scaleX(0.9870);">No actions needed.</span>
<span class="t" id="t98" style="left:413.00px;top:366.53px;font-size:12px;">Power on time:</span>
<span class="t" id="t99" style="left:600.10px;top:366.53px;font-size:12px;font-weight:700;transform:scaleX(0.9563);">230 days, 21 hours</span>
<span class="t" id="t100" style="left:413.00px;top:382.63px;font-size:12px;letter-spacing:0.032px;">Estimated remaining lifetime:</span>
<span class="t" id="t101" style="left:600.10px;top:382.63px;font-size:12px;font-weight:700;transform:scaleX(0.9787);">more than 1000 days</span>
<span class="t" id="t102" style="left:413.00px;top:398.73px;font-size:12px;letter-spacing:0.076px;">Total start/stop count:</span>
<span class="t" id="t103" style="left:600.10px;top:398.73px;font-size:12px;font-weight:700;letter-spacing:0.174px;">2,275</span>
<span class="t" id="t104" style="left:1108.50px;top:374.03px;font-size:12px;transform:scaleX(0.9400);">Repeat Test</span>
<span class="t" id="t105" style="left:416.20px;top:425.73px;font-size:12px;color:#6d6d6d;letter-spacing:0.058px;">Click to add comment ...</span>
<span class="t" id="t106" style="left:420.80px;top:458.23px;font-size:12px;transform:scaleX(0.9949);">Health (%)</span>
<span class="t" id="t107" style="left:100.20px;top:689.17px;font-size:11.6px;transform:scaleX(0.9962);">Status last updated:</span>
<span class="t" id="t108" style="left:206.80px;top:689.17px;font-size:11.6px;transform:scaleX(0.9719);">10/31/2025</span>
<span class="t" id="t109" style="left:267.20px;top:689.17px;font-size:11.6px;transform:scaleX(0.9342);">Friday</span>
<span class="t" id="t110" style="left:302.20px;top:689.17px;font-size:11.6px;transform:scaleX(0.9663);">9:45:05 PM</span>
</div></body></html>
